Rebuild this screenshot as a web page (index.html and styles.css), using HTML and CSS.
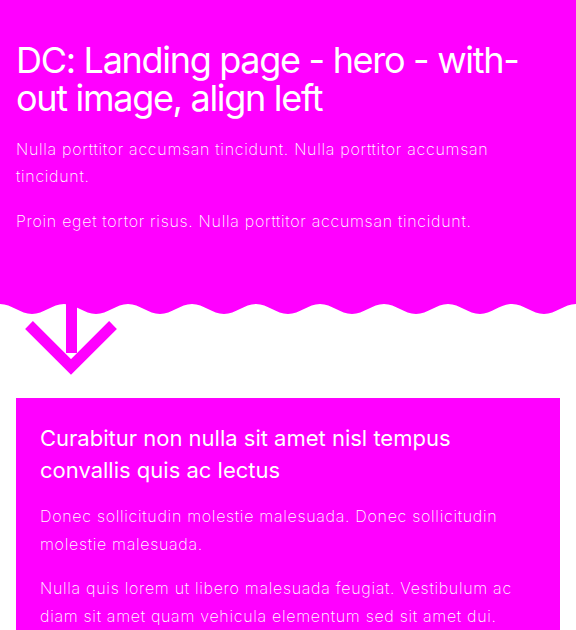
FILE: index.html
```html
<!DOCTYPE html>
<html lang="en">
<head>
<meta charset="utf-8">
<title>DC: Landing page - hero - without image, align left</title>
<link rel="stylesheet" href="styles.css">
</head>
<body>
<section class="hero">
  <h1 class="hero-title">DC: Landing page - hero - with-out image, align left</h1>
  <p class="text">Nulla porttitor accumsan tincidunt. Nulla porttitor accumsan tincidunt.</p>
  <p class="text">Proin eget tortor risus. Nulla porttitor accumsan tincidunt.</p>
</section>
<svg class="hero-edge" width="576" height="80" viewBox="0 0 576 80" aria-hidden="true">
  <path class="wave" d="M0 0 C11.8 0 20.2 10 32 10 C43.8 10 52.2 0 64 0 C75.8 0 84.2 10 96 10 C107.8 10 116.2 0 128 0 C139.8 0 148.2 10 160 10 C171.8 10 180.2 0 192 0 C203.8 0 212.2 10 224 10 C235.8 10 244.2 0 256 0 C267.8 0 276.2 10 288 10 C299.8 10 308.2 0 320 0 C331.8 0 340.2 10 352 10 C363.8 10 372.2 0 384 0 C395.8 0 404.2 10 416 10 C427.8 10 436.2 0 448 0 C459.8 0 468.2 10 480 10 C491.8 10 500.2 0 512 0 C523.8 0 532.2 10 544 10 C555.8 10 564.2 0 576 0 Z"/>
  <rect class="arrow-line" x="66" y="0" width="11" height="49"/>
  <polyline class="arrow-head" points="29,21 71,63 113,21"/>
</svg>
<main class="content">
  <article class="card">
    <h2 class="card-title">Curabitur non nulla sit amet nisl tempus convallis quis ac lectus</h2>
    <p class="text">Donec sollicitudin molestie malesuada. Donec sollicitudin molestie malesuada.</p>
    <p class="text">Nulla quis lorem ut libero malesuada feugiat. Vestibulum ac diam sit amet quam vehicula elementum sed sit amet dui.</p>
  </article>
</main>
</body>
</html>
```
FILE: styles.css
```css
html, body {
  margin: 0;
  padding: 0;
  background: #ffffff;
}
body {
  font-family: Inter, "Noto Sans", sans-serif;
  color: #ffffff;
}
.hero {
  background: #ff00ff;
  padding: 41px 16px 0;
  height: 263px;
}
.hero-title {
  margin: 0 0 18px;
  font-size: 36px;
  line-height: 38.4px;
  font-weight: 400;
  letter-spacing: -1.3px;
}
.text {
  margin: 0 0 17px;
  font-size: 16px;
  line-height: 27.5px;
  font-weight: 200;
  letter-spacing: 0.7px;
}
.hero-edge {
  display: block;
}
.wave, .arrow-line {
  fill: #ff00ff;
}
.arrow-head {
  fill: none;
  stroke: #ff00ff;
  stroke-width: 11;
  stroke-linejoin: miter;
  stroke-linecap: butt;
}
.content {
  padding: 14px 16px 0;
}
.card {
  background: #ff00ff;
  padding: 24px 24px 8px;
}
.card-title {
  margin: 0 0 17px;
  font-size: 22px;
  line-height: 32px;
  font-weight: 400;
}
```
